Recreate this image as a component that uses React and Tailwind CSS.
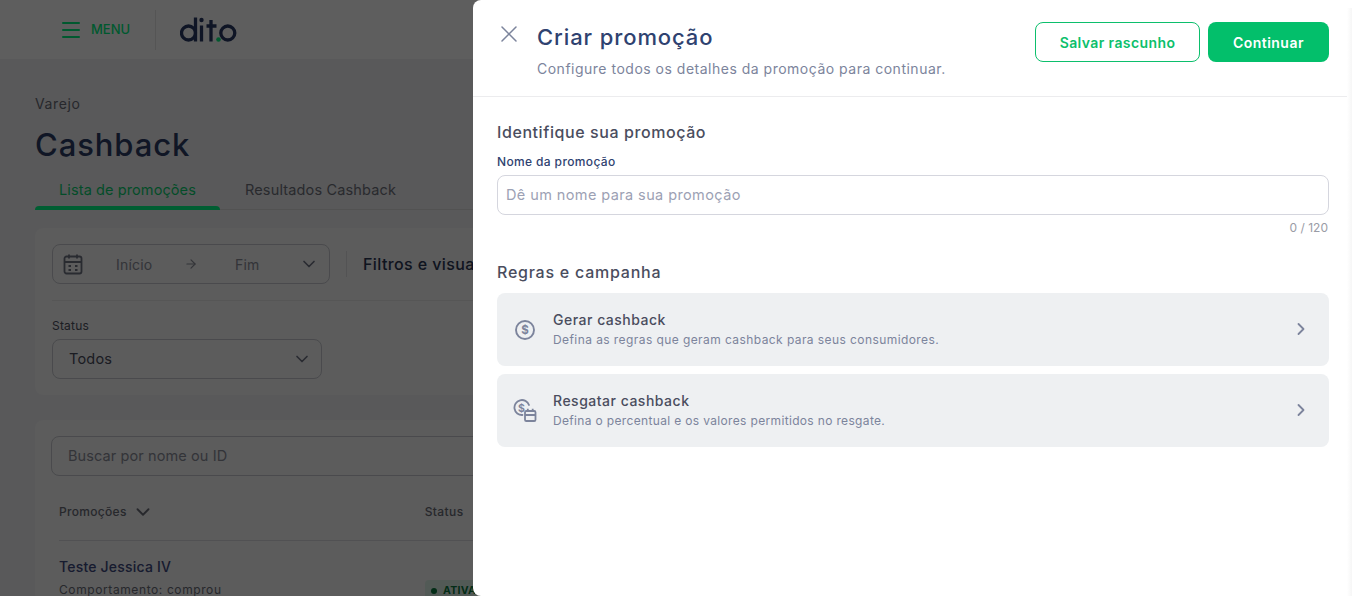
import React from "react";
import { Menu, ArrowRight, ChevronDown, ChevronRight, X } from "lucide-react";

function Logo() {
  return (
    <svg width="57" height="26" viewBox="0 0 57 26" fill="none" className="block">
      <circle cx="8.500" cy="16" r="7" stroke="#2a3a66" strokeWidth="3.300" />
      <path d="M15.500 0.500v24" stroke="#2a3a66" strokeWidth="3.300" />
      <path d="M21.500 8.500v16" stroke="#2a3a66" strokeWidth="3.300" />
      <circle cx="21.500" cy="3" r="2.200" fill="#2a3a66" />
      <path d="M31 3v21.500M26.500 9h10" stroke="#2a3a66" strokeWidth="3.300" />
      <circle cx="47.800" cy="16" r="7" stroke="#2a3a66" strokeWidth="3.300" />
      <circle cx="38.500" cy="22.500" r="2.300" fill="#08f080" />
    </svg>
  );
}

function CalendarIcon() {
  return (
    <svg width="24" height="24" viewBox="0 0 24 24" fill="none" stroke="#6f7484" strokeWidth="1.800" className="shrink-0">
      <rect x="3.500" y="4.500" width="17" height="17" rx="2" />
      <path d="M3.500 10h17M8 2.500v4M16 2.500v4M7.500 14h2.500M14 14h2.500M7.500 18h2.500M14 18h2.500" />
    </svg>
  );
}

function DollarIcon() {
  return (
    <svg width="24" height="24" viewBox="0 0 24 24" fill="none" className="shrink-0">
      <circle cx="12" cy="12" r="9" stroke="#7c849c" strokeWidth="1.900" />
      <text x="12" y="16" textAnchor="middle" fontSize="11.500" fontWeight="700" fill="#7c849c" fontFamily="Inter, sans-serif">$</text>
    </svg>
  );
}

function RedeemIcon() {
  return (
    <svg width="24" height="24" viewBox="0 0 24 24" fill="none" stroke="#7c849c" strokeWidth="1.800" className="shrink-0">
      <path d="M9.500 16a7.500 7.500 0 1 1 6.500-10" strokeLinecap="round" />
      <text x="8.500" y="12.500" textAnchor="middle" fontSize="10.500" fontWeight="700" fill="#7c849c" stroke="none" fontFamily="Inter, sans-serif">$</text>
      <rect x="12" y="12" width="10.500" height="10" rx="1.300" />
      <path d="M12 16h10.500M14.800 9.800v2.500M19.700 9.800v2.500" />
    </svg>
  );
}

function RuleCard({ icon, title, desc, spacing }) {
  return (
    <div className="flex h-[73px] items-center rounded-lg bg-[#eef0f2] pl-[16px] pr-[18px]">
      <div className="flex w-[40px] shrink-0 items-center">{icon}</div>
      <div className="min-w-0 flex-1">
        <div className="text-[14px] font-medium leading-[19px] tracking-[0.5px] text-[#4a4d5e]">{title}</div>
        <div className={"mt-[2px] text-[12px] leading-[18px] text-[#7c849c] " + spacing}>{desc}</div>
      </div>
      <ChevronRight size={20} strokeWidth={2.200} className="mb-[1px] text-[#7c849c]" />
    </div>
  );
}

export default function App() {
  return (
    <div className="relative h-[596px] w-[1352px] overflow-hidden bg-[#f1f1f3] font-['Inter',sans-serif]">
      {/* page behind */}
      <header className="flex h-[59px] items-center bg-white pl-[59px]">
        <div className="flex h-[40px] w-[96px] items-center gap-[8px]">
          <Menu size={24} strokeWidth={2} className="text-[#00f080]" />
          <span className="text-[13px] font-medium text-[#00f080]">MENU</span>
        </div>
        <div className="h-[40px] w-px bg-[#e6e6e6]" />
        <div className="ml-[24px]"><Logo /></div>
      </header>
      <main className="px-[35px]">
        <div className="pt-[36px] text-[14px] leading-[18px] tracking-[0.6px] text-[#6a6d78]">Varejo</div>
        <h1 className="mt-[14px] text-[31px] font-medium leading-[36px] tracking-[0.9px] text-[#2c3c66]">Cashback</h1>
        <div className="mt-[6px] flex h-[41px] items-stretch border-b border-[#dedede]">
          <div className="relative flex w-[185px] items-center justify-center pt-[1px] text-[14.500px] tracking-[0.1px] text-[#0ad070]">
            Lista de promoções
            <div className="absolute inset-x-0 -bottom-px h-[4px] rounded-t bg-[#00ff88]" />
          </div>
          <div className="ml-[25px] flex items-center pt-[1px] text-[14.500px] tracking-[0.15px] text-[#70737e]">Resultados Cashback</div>
        </div>
        <section className="mt-[18px] h-[167px] rounded-lg bg-[#f8f8f9] px-[17px] pt-[16px]">
          <div className="flex items-center border-b border-[#e8e8ea] pb-[16px]">
            <div className="flex h-[40px] w-[278px] items-center rounded-lg border border-[#c9cad0] pl-[8px] pr-[10px] text-[14px] tracking-[0.2px] text-[#8b8e99]">
              <CalendarIcon />
              <span className="ml-[31px] w-[38px]">Início</span>
              <ArrowRight size={14} className="ml-[30px]" />
              <span className="ml-[37px]">Fim</span>
              <ChevronDown size={20} strokeWidth={2} className="ml-auto text-[#6f7484]" />
            </div>
            <div className="ml-[16px] h-[26px] w-px bg-[#e2e2e4]" />
            <span className="ml-[16px] mb-[1px] whitespace-nowrap text-[16px] font-medium tracking-[0.4px] text-[#2b3654]">Filtros e visualização</span>
          </div>
          <div className="mt-[17px] text-[12px] leading-[16px] tracking-[0.2px] text-[#4d5160]">Status</div>
          <div className="mt-[5px] flex h-[40px] w-[270px] items-center justify-between rounded-lg border border-[#c9cad0] pl-[16px] pr-[9px] text-[14.500px] tracking-[0.2px] text-[#4a4d5e]">
            Todos
            <ChevronDown size={20} strokeWidth={2} className="text-[#6f7484]" />
          </div>
        </section>
        <section className="mt-[25px] rounded-lg bg-[#f8f8f9] px-[16px] pt-[16px]">
          <div className="flex h-[40px] items-center rounded-lg border border-[#c9cad0] pl-[16px] text-[14.500px] tracking-[0.1px] text-[#8b8e99]">Buscar por nome ou ID</div>
          <div className="ml-[8px] flex h-[65px] items-center border-b border-[#dcdce0] pt-[8px] text-[12px] font-medium text-[#6a6d78]">
            <span className="tracking-[0.3px]">Promoções</span>
            <ChevronDown size={22} strokeWidth={2} className="ml-[5px]" />
            <span className="ml-[271px] tracking-[0.4px]">Status</span>
          </div>
          <div className="ml-[8px] flex">
            <div className="w-[366px] pt-[17px]">
              <div className="text-[14px] font-medium leading-[18px] tracking-[0.2px] text-[#3e4a80]">Teste Jessica IV</div>
              <div className="mt-[6px] whitespace-nowrap text-[12px] leading-[16px] tracking-[0.6px] text-[#6a6d78]">Comportamento: comprou</div>
            </div>
            <div className="mt-[39px] flex h-[22px] w-[60px] items-center gap-[6px] rounded bg-[#dff5e8] pl-[6px] text-[10.500px] font-bold tracking-[0.3px] text-[#0a7a3f]">
              <span className="h-[6px] w-[6px] rounded-full bg-[#0a7a3f]" />
              ATIVA
            </div>
          </div>
        </section>
      </main>

      {/* overlay */}
      <div className="absolute inset-0 bg-[rgba(0,0,0,0.63)]" />

      {/* drawer */}
      <aside className="absolute bottom-0 right-0 top-0 w-[879px] rounded-bl-lg rounded-tl-lg bg-white">
        <div className="flex h-[97px] border-b border-[#ececee] pl-[22px] pr-[23px]">
          <X size={28} strokeWidth={1.300} className="mt-[20px] text-[#7c849c]" />
          <div className="ml-[14px] flex-1 pt-[22px]">
            <div className="text-[22px] font-medium leading-[30px] tracking-[0.9px] text-[#2f4270]">Criar promoção</div>
            <div className="mt-[7px] text-[14px] leading-[20px] tracking-[0.5px] text-[#7c849c]">Configure todos os detalhes da promoção para continuar.</div>
          </div>
          <div className="mt-[22px] flex gap-[8px]">
            <button className="h-[40px] w-[165px] rounded-lg border border-[#0cbf6c] text-[14px] font-semibold tracking-[0.4px] text-[#0cbf6c]">Salvar rascunho</button>
            <button className="h-[40px] w-[121px] rounded-lg bg-[#03bf6b] text-[14px] font-semibold tracking-[0.45px] text-white">Continuar</button>
          </div>
        </div>
        <div className="pl-[24px] pr-[23px]">
          <h2 className="pt-[24px] text-[16px] font-medium leading-[22px] tracking-[0.58px] text-[#4a4d5e]">Identifique sua promoção</h2>
          <label className="mt-[11px] block text-[12px] font-medium leading-[16px] tracking-[0.37px] text-[#2f4270]">Nome da promoção</label>
          <div className="mt-[5px] flex h-[40px] items-center rounded-lg border border-[#d5d6de] pl-[8px] text-[14.500px] tracking-[0.4px] text-[#9ca1b4]">Dê um nome para sua promoção</div>
          <div className="mt-[5px] pr-[1px] text-right text-[12px] leading-[16px] text-[#9a9ca6]">0 / 120</div>
          <h2 className="mt-[25px] text-[16px] font-medium leading-[22px] tracking-[0.76px] text-[#4a4d5e]">Regras e campanha</h2>
          <div className="mt-[10px] flex flex-col gap-[8px]">
            <RuleCard icon={<DollarIcon />} title="Gerar cashback" desc="Defina as regras que geram cashback para seus consumidores." spacing="tracking-[0.42px]" />
            <RuleCard icon={<RedeemIcon />} title="Resgatar cashback" desc="Defina o percentual e os valores permitidos no resgate." spacing="tracking-[0.34px]" />
          </div>
        </div>
        <div className="absolute bottom-0 right-0 top-[8px] w-[5px] bg-gradient-to-r from-white to-[#f6f6f6]" />
      </aside>
    </div>
  );
}
